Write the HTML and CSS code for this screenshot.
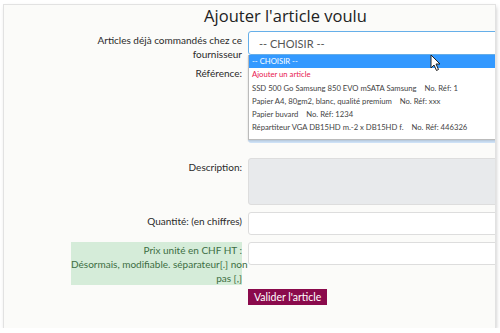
FILE: index.html
```html
<!DOCTYPE html>
<html lang="fr">
<head>
    <meta charset="UTF-8">
    <meta name="viewport" content="width=device-width, initial-scale=1.0">
    <title>Ajouter l'article voulu</title>
    <link rel="stylesheet" href="styles.css">
</head>
<body>
    <div class="frame">
        <h1 class="title">Ajouter l'article voulu</h1>

        <form class="form">
            <label class="label">Articles déjà commandés chez ce<br>fournisseur</label>
            <div class="field select-wrap">
                <div class="select">
                    <span>-- CHOISIR --</span>
                    <svg class="arrows" width="7" height="10" viewBox="0 0 7 10">
                        <path d="M3.5 0 L7 4 H0 Z M3.5 10 L7 6 H0 Z" fill="#333"/>
                    </svg>
                </div>
                <ul class="dropdown">
                    <li class="selected">-- CHOISIR --</li>
                    <li class="add">Ajouter un article</li>
                    <li>SSD 500 Go Samsung 850 EVO mSATA Samsung&nbsp;&nbsp;&nbsp; No. Réf: 1</li>
                    <li>Papier A4, 80gm2, blanc, qualité premium&nbsp;&nbsp;&nbsp; No. Réf: xxx</li>
                    <li>Papier buvard&nbsp;&nbsp;&nbsp; No. Réf: 1234</li>
                    <li>Répartiteur VGA DB15HD m.-2 x DB15HD f.&nbsp;&nbsp;&nbsp; No. Réf: 446326</li>
                </ul>
                <svg class="cursor" width="12" height="18" viewBox="0 0 12 18">
                    <path d="M1 1 V14 L4 11 L6.5 16.5 L8.5 15.5 L6 10 H10 Z" fill="#fff" stroke="#222" stroke-width="1"/>
                </svg>
            </div>

            <label class="label">Référence:</label>
            <div class="field"><div class="input ref"></div></div>

            <label class="label">Description:</label>
            <div class="field"><div class="input desc"></div></div>

            <label class="label">Quantité: (en chiffres)</label>
            <div class="field"><div class="input"></div></div>

            <label class="label note">Prix unité en CHF HT :<br>Désormais, modifiable. séparateur[.] non<br>pas [,]</label>
            <div class="field"><div class="input"></div></div>

            <div></div>
            <div class="field"><button type="button" class="submit">Valider l'article</button></div>
        </form>
    </div>
</body>
</html>
```

FILE: styles.css
```css
body {
    margin: 0;
    padding: 5px 5px 0 4px;
    background-color: #fff;
    font-family: Lato, "Open Sans", sans-serif;
    color: #333;
}

.frame {
    width: 491px;
    height: 323px;
    background-color: #fbfbf9;
    box-shadow: 0 0 0 1px #e2e2e2, 1px 2px 4px rgba(0, 0, 0, 0.25);
    overflow: hidden;
    box-sizing: border-box;
}

.title {
    margin: 0;
    padding-left: 72px;
    text-align: center;
    font-family: "Open Sans", sans-serif;
    font-size: 16.5px;
    font-weight: normal;
    line-height: 21px;
    color: #222;
}

.form {
    display: grid;
    grid-template-columns: 175px 260px;
    column-gap: 6px;
    padding: 5px 0 0 63px;
}

.label {
    text-align: right;
    font-size: 10px;
    line-height: 14px;
    color: #2a2a2a;
    padding-top: 2px;
    white-space: nowrap;
}

.field {
    margin-bottom: 7px;
}

.select-wrap {
    position: relative;
    z-index: 2;
    margin-bottom: 9px;
}

.select {
    height: 24px;
    border: 1px solid #66afe9;
    border-radius: 3px;
    background-color: #fff;
    display: flex;
    align-items: center;
    justify-content: space-between;
    padding: 0 11px 0 10px;
    font-size: 11px;
    color: #555;
    box-sizing: border-box;
}

.arrows {
    margin-right: -8px;
}

.dropdown {
    position: absolute;
    top: 24px;
    left: 0;
    width: 250px;
    margin: 0;
    padding: 0 0 4px 0;
    list-style: none;
    background-color: #fff;
    border: 1px solid #bbb;
    border-top: none;
    box-shadow: 0 1px 2px rgba(0, 0, 0, 0.15);
    font-size: 7.7px;
    color: #444;
}

.dropdown li {
    height: 13.3px;
    line-height: 13.3px;
    padding-left: 3px;
    white-space: nowrap;
}

.dropdown li.selected {
    background-color: #3399ff;
    color: #fff;
}

.dropdown li.add {
    color: #e8164f;
}

.cursor {
    position: absolute;
    top: 23px;
    left: 182px;
}

.input {
    height: 23px;
    border: 1px solid #ddd;
    border-radius: 3px;
    background-color: #fff;
    box-sizing: border-box;
}

.input.ref {
    height: 79px;
    background-color: #cfe3f8;
    border-color: #cfe3f8;
    margin-bottom: 8px;
}

.input.desc {
    height: 47px;
    background-color: #e8eaec;
}

.note {
    background-color: #d5ecd9;
    color: #3c6e43;
    height: 43px;
    padding-top: 1px;
    box-sizing: border-box;
    margin-left: 4px;
}

.submit {
    height: 16px;
    padding: 0 6px;
    border: none;
    background-color: #8a0a4c;
    color: #fff;
    font-family: Lato, "Open Sans", sans-serif;
    font-size: 10.5px;
    line-height: 16px;
    cursor: pointer;
}
```
